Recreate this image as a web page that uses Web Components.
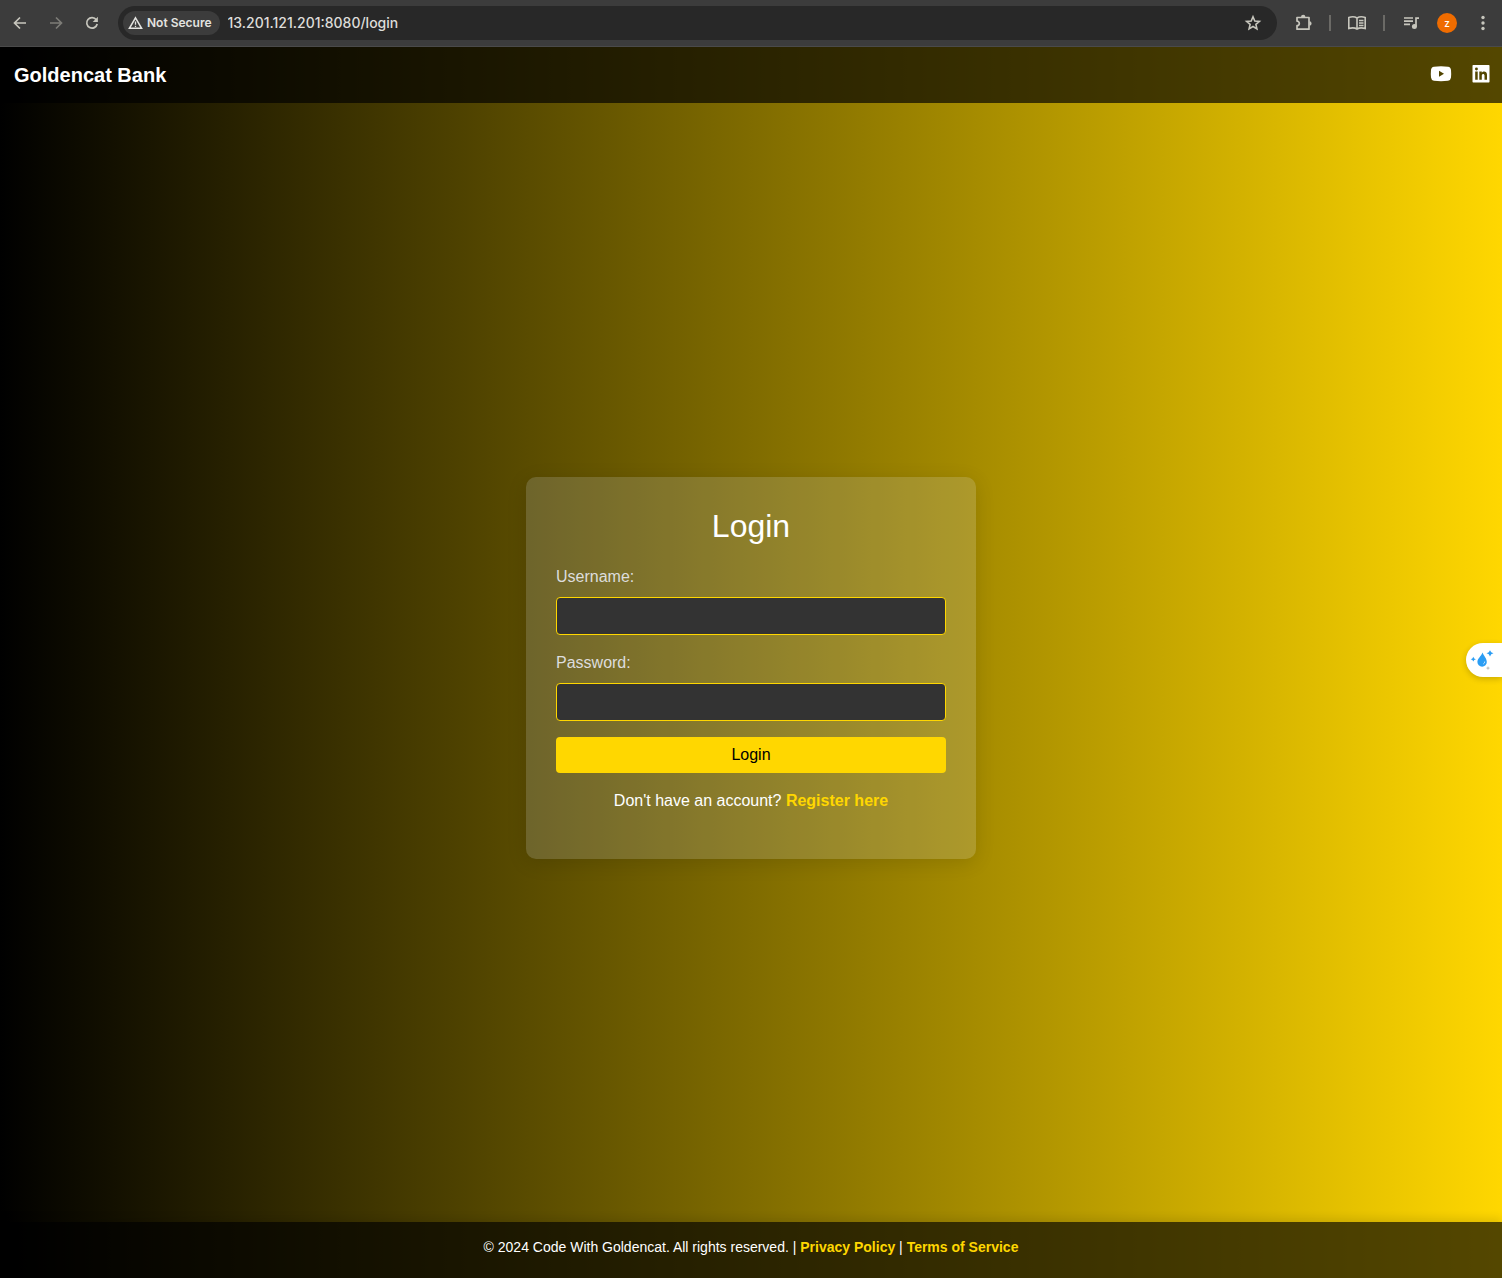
<!DOCTYPE html>
<html lang="en">
<head>
<meta charset="utf-8">
<title>Goldencat Bank - Login</title>
<style>
html, body { height: 100%; margin: 0; }
body { display: flex; flex-direction: column; min-height: 100vh; font-family: "Liberation Sans", Arial, sans-serif; font-size: 16px; color: #fff; background: #000; }
</style>
</head>
<body>
<browser-bar></browser-bar>
<bank-page>
  <site-header slot="header">Goldencat Bank</site-header>
  <login-card></login-card>
  <site-footer slot="footer"></site-footer>
</bank-page>
<script>
function define(name, html) {
  const template = document.createElement('template');
  template.innerHTML = html;
  customElements.define(name, class extends HTMLElement {
    constructor() {
      super();
      this.attachShadow({ mode: 'open' }).append(template.content.cloneNode(true));
    }
  });
}

define('browser-bar', `
<style>
:host { display: flex; align-items: center; box-sizing: border-box; flex: none; height: 47px; padding: 0 9px 1px 10px; background: #3c3c3c; border-bottom: 1px solid #4a4a4a; color: #c7c6bd; font-family: Inter, Roboto, sans-serif; }
button { all: unset; display: flex; flex: none; }
svg { display: block; fill: none; stroke: currentColor; stroke-width: 2; }
nav { display: flex; gap: 16px; margin-right: 16px; }
.off { color: #7d7c77; }
.address { display: flex; flex: 1; align-items: center; box-sizing: border-box; min-width: 0; height: 34px; padding: 0 14px 0 5px; background: #282828; border-radius: 17px; }
.chip { display: flex; align-items: center; gap: 4px; height: 24px; padding: 0 8px 0 5px; margin-right: 4px; border-radius: 12px; background: #3c3c3c; color: #e3e3e0; font-size: 12px; font-weight: 600; white-space: nowrap; }
input { all: unset; flex: 1; min-width: 0; padding: 0 4px; color: #deddda; font-size: 14px; font-weight: 500; line-height: 20px; }
.tools { display: flex; align-items: center; gap: 16px; margin-left: 16px; }
.rule { width: 2px; height: 16px; background: #6b6a66; }
.avatar { justify-content: center; align-items: center; width: 20px; height: 20px; border-radius: 10px; background: #ef6c00; color: #fff; font-size: 10px; font-weight: 500; }
</style>
<nav aria-label="History">
<button aria-label="Back"><svg width="20" height="20" viewBox="0 0 20 20"><path d="M16 10H5M10 4.500L4.500 10l5.500 5.500" stroke-width="1.700"/></svg></button>
<button class="off" aria-label="Forward"><svg width="20" height="20" viewBox="0 0 20 20"><path d="M4 10h11M10 4.500l5.500 5.500-5.500 5.500" stroke-width="1.700"/></svg></button>
<button aria-label="Reload"><svg width="20" height="20" viewBox="0 0 20 20"><path d="M14.300 6.700A5.300 5.300 0 1 0 15.200 11" stroke-width="1.700"/><path d="M15.900 3.800v5.200h-5.200z" fill="currentColor" stroke="none"/></svg></button>
</nav>
<div class="address">
<span class="chip"><svg width="15" height="14" viewBox="0 0 15 14"><path d="M7.500 1.800L13.600 12.300H1.400z" stroke-width="1.500"/><path d="M7.500 5.500v3.200M7.500 9.700v1.300" stroke-width="1.300"/></svg>Not Secure</span>
<input aria-label="Address" value="13.201.121.201:8080/login" spellcheck="false">
<button aria-label="Bookmark"><svg width="20" height="20" viewBox="0 0 20 20"><path d="M10 3.800l1.800 4.200 4.600.4-3.500 3 1 4.500L10 13.500l-3.900 2.400 1-4.500-3.500-3 4.600-.4z" stroke-width="1.600"/></svg></button>
</div>
<div class="tools">
<button aria-label="Extensions"><svg width="20" height="20" viewBox="0 0 20 20"><path d="M4 4.500h12v11.700H4v-3.500a2.300 2.300 0 0 0 0-4.600z" stroke-width="1.700" stroke-linejoin="round"/><path d="M8 4a2.200 2.200 0 0 1 4.400 0zM16.400 8.200a2.200 2.200 0 0 1 0 4.400z" fill="currentColor" stroke="none"/></svg></button>
<span class="rule"></span>
<button aria-label="Reading mode"><svg width="20" height="20" viewBox="0 0 20 20"><path d="M10 5C8 3.700 4 3.700 1.800 4.500v11c2.500-.8 6-.8 8.200.5 2.200-1.300 5.700-1.300 8.200-.5v-11C16 3.700 12 3.700 10 5zv11M12 7.500h4.500M12 10h4.500M12 12.500h4.500" stroke-width="1.600"/></svg></button>
<span class="rule"></span>
<button aria-label="Media"><svg width="20" height="20" viewBox="0 0 20 20"><path d="M3 5h9M3 8.200h9M3 11.400h6M15 13.500V5.200h3" stroke-width="1.700"/><circle cx="13.400" cy="13.400" r="2.500" fill="currentColor" stroke="none"/></svg></button>
<button class="avatar" aria-label="Profile">z</button>
<button aria-label="Menu"><svg width="20" height="20" viewBox="0 0 20 20"><g fill="currentColor" stroke="none"><circle cx="10" cy="4.500" r="1.700"/><circle cx="10" cy="10" r="1.700"/><circle cx="10" cy="15.500" r="1.700"/></g></svg></button>
</div>`);

define('bank-page', `
<style>
:host { display: flex; flex: 1; flex-direction: column; position: relative; background: linear-gradient(to right, #000, #ffd700); }
main { display: flex; flex: 1; align-items: center; justify-content: center; padding: 10px 0 0; }
</style>
<slot name="header"></slot>
<main><slot></slot></main>
<slot name="footer"></slot>
<side-helper></side-helper>`);

define('site-header', `
<style>
:host { display: flex; align-items: center; justify-content: space-between; box-sizing: border-box; height: 56px; padding: 0 12px 0 14px; background: rgba(0,0,0,.67); }
h1 { margin: 0; font-size: 20px; line-height: 24px; }
nav { display: flex; align-items: center; gap: 20px; }
a { display: flex; color: #fff; }
svg { display: block; fill: currentColor; }
</style>
<h1><slot></slot></h1>
<nav aria-label="Social">
<a href="#youtube" aria-label="YouTube"><svg width="22" height="20" viewBox="0 1 22 20"><path fill-rule="evenodd" d="M4 2.700Q11 1.800 18 2.700Q20.700 3 21 6Q21.400 10 21 13.500Q20.700 16.400 18 16.800Q11 17.500 4 16.800Q1.300 16.400 1 13.500Q.6 10 1 6Q1.300 3 4 2.700zM9 6.700v6l5-3z"/></svg></a>
<a href="#linkedin" aria-label="LinkedIn"><svg width="18" height="20" viewBox="0 1 18 20"><path fill-rule="evenodd" d="M1.200 1h15.600q.7 0 .7.700v16q0 .7-.7.700H1.200q-.7 0-.7-.7v-16q0-.7.700-.7zM3.200 7.600v8.200h2.500V7.600zM4.450 3.600a1.450 1.450 0 1 0 0 2.900 1.450 1.450 0 0 0 0-2.900zM7.300 7.600v8.200h2.500v-4.200c0-2.200 2.700-2.300 2.700 0v4.200H15v-5c0-3.900-3.900-4.200-5.200-2.100V7.600z"/></svg></a>
</nav>`);

define('login-card', `
<style>
:host { display: block; box-sizing: border-box; width: 450px; max-width: 100%; padding: 30px 30px 46px; border-radius: 10px; background: rgba(215,225,255,.17); box-shadow: 0 4px 20px rgba(0,0,0,.12); }
h2 { margin: 0 0 20px; font-size: 32px; line-height: 38px; font-weight: 400; text-align: center; }
form { display: block; }
label { display: block; margin-bottom: 8px; line-height: 24px; color: #ddd; }
input { display: block; box-sizing: border-box; width: 100%; height: 38px; margin: 0 0 16px; padding: 8px; border: 1px solid #ffd700; border-radius: 4px; background: #333; color: #fff; font: inherit; }
button { display: block; width: 100%; height: 36px; margin: 0; padding: 0; border: 0; border-radius: 4px; background: #ffd700; color: #000; font: inherit; }
p { margin: 16px 0 0; line-height: 24px; text-align: center; }
a { color: #ffd700; font-weight: 700; text-decoration: none; }
</style>
<h2>Login</h2>
<form>
<label for="username">Username:</label><input id="username" type="text">
<label for="password">Password:</label><input id="password" type="password">
<button type="button">Login</button>
</form>
<p>Don't have an account? <a href="#register">Register here</a></p>`);

define('site-footer', `
<style>
:host { display: flex; justify-content: center; box-sizing: border-box; padding: 15px 0 20px; background: rgba(0,0,0,.67); box-shadow: 0 -4px 8px rgba(0,0,0,.1); font-size: 14px; line-height: 21px; }
a { color: #ffd700; font-weight: 700; text-decoration: none; }
</style>
<div>© 2024 Code With Goldencat. All rights reserved. | <a href="#privacy">Privacy Policy</a> | <a href="#terms">Terms of Service</a></div>`);

define('side-helper', `
<style>
:host { position: absolute; right: 0; top: 596px; }
button { all: unset; display: flex; align-items: center; width: 32px; height: 34px; padding-left: 4px; border-radius: 17px 0 0 17px; background: #fff; box-shadow: 0 2px 6px rgba(0,0,0,.2); }
svg { display: block; }
</style>
<button aria-label="Assistant"><svg width="26" height="24" viewBox="0 0 26 24"><path fill="#2b9df4" d="M12.500 4.500c1.300 3.600 4.300 5.800 4.300 9.500a4.700 4.700 0 0 1-9.400 0C7.400 10.500 11 8.500 12.500 4.500z"/><path fill="#2b9df4" d="M20 2.200l1.200 2.100 2.300 1-2.300 1L20 8.400l-1.200-2.100-2.300-1 2.300-1zM3.300 8.800l.9 1.700 1.700.7-1.700.7-.9 1.700-.9-1.700-1.700-.7 1.700-.7z"/><path fill="none" stroke="#bfe2fc" d="M14.700 13.500a2.500 2.500 0 0 1-1.500 2.500"/><path fill="#bbb" d="M18 18l.6 1.500 1.500.6-1.500.6-.6 1.500-.6-1.500-1.500-.6 1.500-.6z"/></svg></button>`);
</script>
</body>
</html>
